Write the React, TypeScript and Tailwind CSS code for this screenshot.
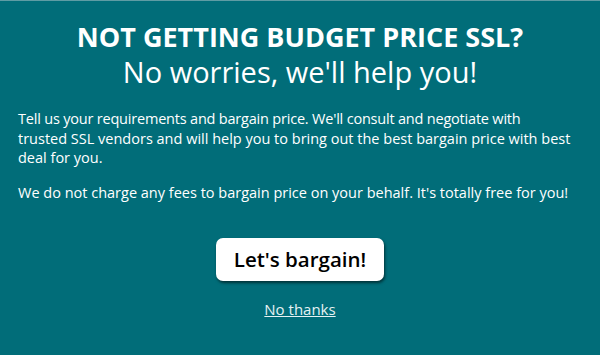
export default function App() {
  return (
    <div
      className="w-[600px] h-[355px] bg-[#016d79] border-t border-[#5f9ca4] text-white flex flex-col items-center"
      style={{ fontFamily: '"Open Sans", sans-serif' }}
    >
      <h1 className="mt-[18px] text-[27px] leading-[36px] font-bold">NOT GETTING BUDGET PRICE SSL?</h1>
      <h2 className="text-[29px] leading-[34px] font-normal">No worries, we'll help you!</h2>
      <div className="self-stretch px-[18px] mt-[20px] text-[14.5px] leading-[19.5px]">
        <p>
          <span className="block whitespace-nowrap tracking-[-0.2px]">Tell us your requirements and bargain price. We'll consult and negotiate with</span>
          <span className="block whitespace-nowrap">trusted SSL vendors and will help you to bring out the best bargain price with best</span>
          <span className="block whitespace-nowrap">deal for you.</span>
        </p>
        <p className="mt-[15px] whitespace-nowrap">We do not charge any fees to bargain price on your behalf. It's totally free for you!</p>
      </div>
      <button className="mt-[36px] w-[168px] h-[43px] bg-white text-black rounded-[7px] text-[20.5px] font-semibold shadow-[1px_2px_3px_rgba(0,0,0,0.55)]">
        Let's bargain!
      </button>
      <a className="mt-[18px] text-[15px] leading-[20px] underline text-[#e6f2f3]">No thanks</a>
    </div>
  );
}
